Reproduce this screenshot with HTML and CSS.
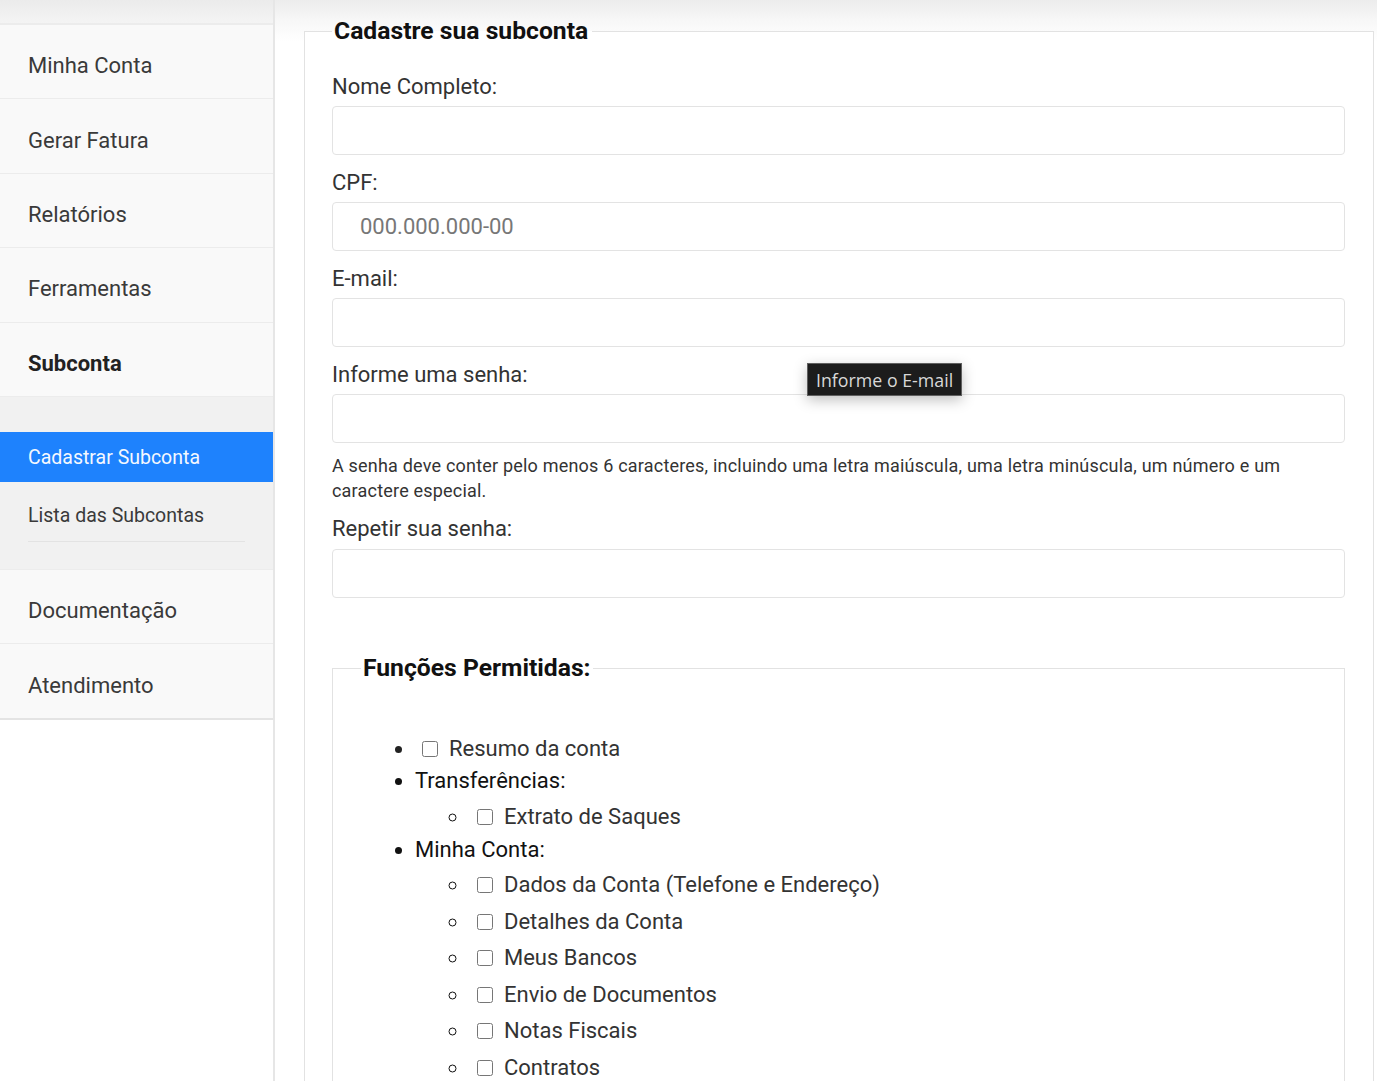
FILE: index.html
```html
<!DOCTYPE html>
<html lang="pt-BR">
<head>
<meta charset="utf-8">
<title>Cadastre sua subconta</title>
<link rel="stylesheet" href="styles.css">
</head>
<body>
<div class="layout">
  <aside class="sidebar">
    <div class="sidebar-top"></div>
    <nav class="menu">
      <a class="menu-item" href="#">Minha Conta</a>
      <a class="menu-item" href="#">Gerar Fatura</a>
      <a class="menu-item" href="#">Relatórios</a>
      <a class="menu-item" href="#">Ferramentas</a>
      <a class="menu-item menu-item-open" href="#">Subconta</a>
      <div class="submenu">
        <a class="submenu-item submenu-active" href="#">Cadastrar Subconta</a>
        <a class="submenu-item submenu-underline" href="#">Lista das Subcontas</a>
      </div>
      <a class="menu-item" href="#">Documentação</a>
      <a class="menu-item menu-item-last" href="#">Atendimento</a>
    </nav>
  </aside>
  <main class="content">
    <form class="form">
      <fieldset class="box">
        <legend class="box-title">Cadastre sua subconta</legend>
        <div class="field">
          <label class="label" for="nome">Nome Completo:</label>
          <input class="input" id="nome" type="text">
        </div>
        <div class="field">
          <label class="label" for="cpf">CPF:</label>
          <input class="input input-cpf" id="cpf" type="text" placeholder="000.000.000-00">
        </div>
        <div class="field">
          <label class="label" for="email">E-mail:</label>
          <input class="input" id="email" type="text">
        </div>
        <div class="field field-tip">
          <label class="label" for="senha">Informe uma senha:</label>
          <input class="input" id="senha" type="password">
          <div class="tooltip">Informe o E-mail</div>
          <p class="help">A senha deve conter pelo menos 6 caracteres, incluindo uma letra maiúscula, uma letra minúscula, um número e um caractere especial.</p>
        </div>
        <div class="field">
          <label class="label label-tight" for="senha2">Repetir sua senha:</label>
          <input class="input" id="senha2" type="password">
        </div>

        <fieldset class="box box-inner">
          <legend class="box-title box-title-inner">Funções Permitidas:</legend>
          <ul class="perms">
            <li class="perm-check"><input class="check" type="checkbox"><span>Resumo da conta</span></li>
            <li class="perm-group">Transferências:
              <ul class="perms-sub">
                <li><input class="check" type="checkbox"><span>Extrato de Saques</span></li>
              </ul>
            </li>
            <li class="perm-group">Minha Conta:
              <ul class="perms-sub">
                <li><input class="check" type="checkbox"><span>Dados da Conta (Telefone e Endereço)</span></li>
                <li><input class="check" type="checkbox"><span>Detalhes da Conta</span></li>
                <li><input class="check" type="checkbox"><span>Meus Bancos</span></li>
                <li><input class="check" type="checkbox"><span>Envio de Documentos</span></li>
                <li><input class="check" type="checkbox"><span>Notas Fiscais</span></li>
                <li><input class="check" type="checkbox"><span>Contratos</span></li>
              </ul>
            </li>
          </ul>
        </fieldset>
      </fieldset>
    </form>
  </main>
</div>
</body>
</html>
```

FILE: styles.css
```css
* { box-sizing: border-box; }

html, body {
  margin: 0;
  padding: 0;
  background: #fff;
  font-family: Roboto, "Liberation Sans", Arial, sans-serif;
  color: #333;
}

.layout {
  display: flex;
  min-height: 100vh;
}

/* Sidebar */
.sidebar {
  width: 275px;
  flex: 0 0 275px;
  border-right: 2px solid #e6e6e6;
  background: #fff;
}

.sidebar-top {
  height: 25px;
  background: linear-gradient(to bottom, #ebebeb, #f4f4f4);
  border-bottom: 2px solid #ececec;
}

.menu {
  display: flex;
  flex-direction: column;
  border-bottom: 2px solid #e4e4e4;
}

.menu-item {
  display: flex;
  align-items: center;
  height: 74.4px;
  padding-left: 28px;
  padding-top: 8px;
  background: #f9f9f9;
  border-bottom: 1px solid #ececec;
  color: #3a3a3a;
  font-size: 22px;
  text-decoration: none;
}

.menu-item-last { border-bottom: 0; height: 74px; }

.menu-item-open {
  font-weight: 700;
  color: #222;
}

.submenu {
  background: #f1f1f1;
  padding: 35px 0 27px;
  border-bottom: 1px solid #ececec;
}

.submenu-item {
  display: flex;
  align-items: center;
  height: 50px;
  padding-left: 28px;
  padding-top: 1px;
  color: #3a3a3a;
  font-size: 19.5px;
  text-decoration: none;
}

.submenu-active {
  background: #1e82fd;
  color: #f4f8ff;
}

.submenu-underline {
  height: 60px;
  margin: 0 28px;
  padding-left: 0;
  padding-top: 8px;
  border-bottom: 1px solid #e3e3e3;
}

/* Content */
.content {
  flex: 1;
  padding: 16px 3px 0 29px;
  background: linear-gradient(to bottom, #ececec 0, #f7f7f7 20px, #fff 42px);
}

.form { margin: 0; }

.box {
  margin: 0;
  padding: 26px 28px 0 27px;
  border: 1px solid #e2e2e2;
  border-bottom: 0;
  min-width: 0;
  background: #fff;
}

.box-title {
  padding: 0 4px 0 2px;
  font-size: 24.7px;
  font-weight: 700;
  line-height: 30px;
  color: #111;
}

.field {
  position: relative;
  margin-bottom: 13px;
}

.field-tip { margin-bottom: 11px; }

.label {
  display: block;
  font-size: 22px;
  line-height: 30px;
  margin-bottom: 4px;
  color: #333;
}

.label-tight { margin-bottom: 5px; }

.input {
  display: block;
  width: 100%;
  height: 49px;
  margin: 0;
  padding: 0 27px;
  border: 1px solid #e3e3e3;
  border-radius: 4px;
  background: #fff;
  font-family: Roboto, "Liberation Sans", Arial, sans-serif;
  font-size: 22px;
  color: #333;
  outline: none;
}

.input::placeholder { color: #777; }

.help {
  margin: 10px 0 0;
  font-size: 18px;
  letter-spacing: 0.2px;
  line-height: 25px;
  color: #333;
}

.tooltip {
  position: absolute;
  left: 475px;
  top: 3px;
  height: 33px;
  padding: 0 8px;
  display: flex;
  align-items: center;
  background: #1c1c1c;
  border: 1px solid #5f5f5f;
  color: #d8d8d8;
  font-family: "Open Sans", "Noto Sans", sans-serif;
  font-size: 17.8px;
  white-space: nowrap;
  box-shadow: 0 4px 14px rgba(0, 0, 0, 0.25);
  z-index: 2;
}

/* Inner fieldset */
.box-inner {
  margin: 55px 0 0;
  padding: 28px 28px 40px 28px;
  border: 1px solid #e2e2e2;
  border-bottom: 0;
}

.box-title-inner {
  font-size: 24.7px;
  padding: 0 2px;
}

.perms {
  margin: 22px 0 0;
  padding-left: 54px;
  list-style: disc;
  font-size: 22px;
  color: #222;
}

.perms > li {
  line-height: 32px;
}

.perms-sub {
  margin: 0;
  padding-left: 54px;
  list-style: circle;
}

.perms-sub > li {
  line-height: 34px;
  padding-top: 2.5px;
}

.check {
  width: 16px;
  height: 16px;
  margin: 0 11px 0 7px;
  vertical-align: -1px;
}

.perms-sub .check { margin-left: 8px; }

.perm-check span,
.perms-sub span {
  color: #333;
}

.perm-group { color: #111; }
```
